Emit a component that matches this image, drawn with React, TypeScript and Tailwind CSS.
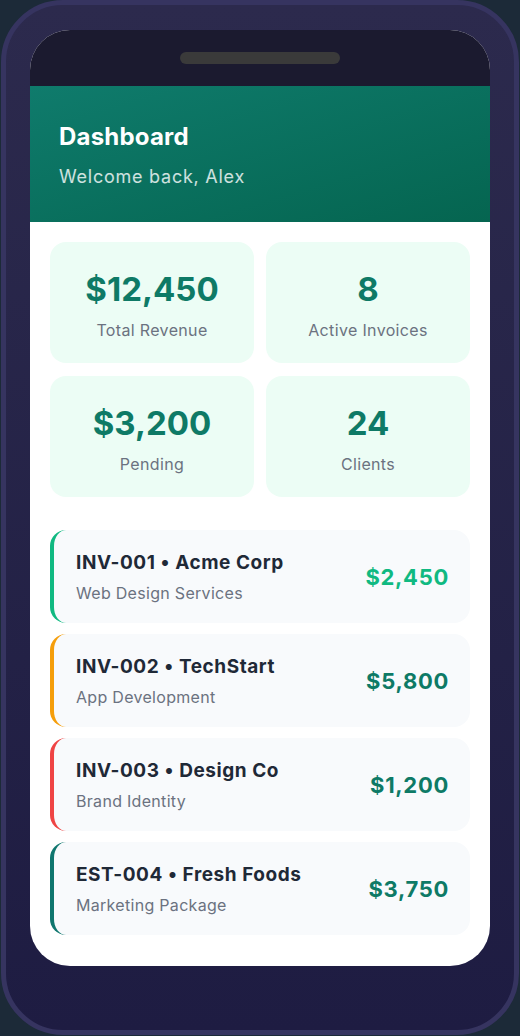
import type { FC } from "react";

type Stat = { value: string; label: string };
type Invoice = { id: string; client: string; service: string; amount: string; bar: string; amountColor: string };

const stats: Stat[] = [
	{ value: "$12,450", label: "Total Revenue" },
	{ value: "8", label: "Active Invoices" },
	{ value: "$3,200", label: "Pending" },
	{ value: "24", label: "Clients" },
];

const invoices: Invoice[] = [
	{ id: "INV-001", client: "Acme Corp", service: "Web Design Services", amount: "$2,450", bar: "border-[#10b981]", amountColor: "text-[#10b981]" },
	{ id: "INV-002", client: "TechStart", service: "App Development", amount: "$5,800", bar: "border-[#f59e0b]", amountColor: "text-[#0e7a66]" },
	{ id: "INV-003", client: "Design Co", service: "Brand Identity", amount: "$1,200", bar: "border-[#ef4444]", amountColor: "text-[#0e7a66]" },
	{ id: "EST-004", client: "Fresh Foods", service: "Marketing Package", amount: "$3,750", bar: "border-[#0f766e]", amountColor: "text-[#0e7a66]" },
];

const StatCard: FC<{ stat: Stat }> = ({ stat }) => (
	<div className="h-[121px] rounded-2xl bg-[#ecfdf5] flex flex-col items-center pt-[27px]">
		<span className="text-[33px] leading-[40px] font-bold text-[#0e7a66]">{stat.value}</span>
		<span className="mt-[9px] text-base leading-6 tracking-[0.35px] text-[#6b7280]">{stat.label}</span>
	</div>
);

const InvoiceRow: FC<{ inv: Invoice }> = ({ inv }) => (
	<div className={`h-[93px] rounded-2xl border-l-4 ${inv.bar} bg-[#f8fafc] pl-[22px] pr-[21px] flex items-center justify-between`}>
		<div className="flex flex-col">
			<span className="text-[19px] leading-7 font-bold tracking-[0.55px] text-[#1f2937]">
				{inv.id} • {inv.client}
			</span>
			<span className="mt-1 text-base leading-6 tracking-[0.3px] text-[#6b7280]">{inv.service}</span>
		</div>
		<span className={`text-[22px] leading-7 font-bold tracking-[0.7px] ${inv.amountColor}`}>{inv.amount}</span>
	</div>
);

export default function App() {
	return (
		<div className="min-h-[1036px] bg-[#1c2a38] font-['Inter',sans-serif]">
			{/* Phone frame */}
			<div className="ml-px w-[518px] h-[1035px] rounded-[62px] border-[5px] border-[#363460] bg-gradient-to-b from-[#2c2a4d] to-[#1e1c42] px-[24px] pt-[25px]">
				{/* Screen */}
				<div className="w-[460px] h-[936px] rounded-[40px] overflow-hidden bg-white flex flex-col">
					{/* Notch */}
					<div className="h-[56px] bg-[#1b1a2f] flex justify-center pt-[22px]">
						<div className="w-[160px] h-[12px] rounded-full bg-[#3a3a3a]" />
					</div>

					{/* Header */}
					<div className="h-[136px] bg-gradient-to-br from-[#0f7b6c] to-[#056550] px-[29px] pt-[35px]">
						<h1 className="text-2xl leading-8 font-bold tracking-[0.2px] text-white">Dashboard</h1>
						<p className="mt-[10px] text-lg leading-7 tracking-[0.75px] text-white/80">Welcome back, Alex</p>
					</div>

					{/* Stats */}
					<div className="p-5 grid grid-cols-2 gap-x-3 gap-y-[13px]">
						{stats.map((s) => (
							<StatCard key={s.label} stat={s} />
						))}
					</div>

					{/* Invoices */}
					<div className="px-5 pt-[13px] flex flex-col gap-[11px]">
						{invoices.map((inv) => (
							<InvoiceRow key={inv.id} inv={inv} />
						))}
					</div>
				</div>
			</div>
		</div>
	);
}
